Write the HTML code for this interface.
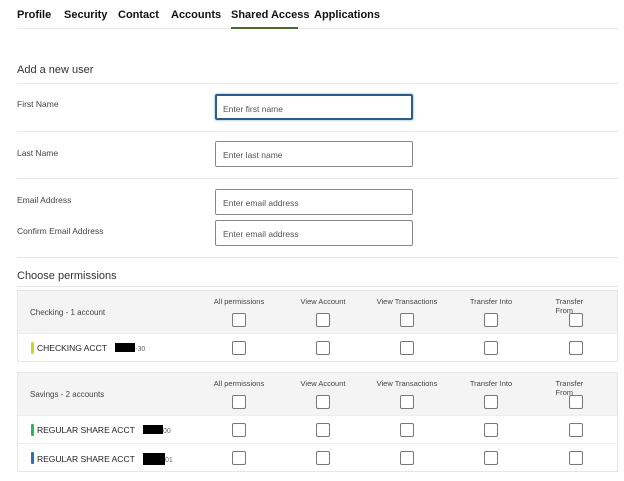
<!DOCTYPE html>
<html><head><style>
*{margin:0;padding:0;box-sizing:border-box}
body{width:624px;height:481px;background:#fff;font-family:"Liberation Sans",sans-serif;color:#333;position:relative;overflow:hidden}
.a{position:absolute;white-space:nowrap}
.tab{position:absolute;top:9px;font-size:11px;font-weight:bold;color:#111}
.hr{position:absolute;left:17px;width:601px;height:1px;background:#e6e6e6}
.lbl{position:absolute;left:17px;font-size:8.5px;color:#444}
.inp{position:absolute;left:215px;width:198px;height:26px;border:1px solid #888;border-radius:2px;font-size:8.5px;color:#555;padding:8px 0 0 7px}
.sec{position:absolute;left:17px;font-size:11px;color:#333}
.tbl{position:absolute;left:17px;width:601px;border:1px solid #e6e6e6}
.hd{background:#f4f4f4;position:relative}
.row{position:relative;height:28px;border-top:1px solid #eee}
.cb{position:absolute;width:14px;height:14px;border:1px solid #777;border-radius:2px;background:#fff}
.ch{position:absolute;font-size:7.5px;color:#444;transform:translateX(-50%);top:6px}
.acct{position:absolute;left:19px;top:9px;font-size:8.5px;color:#222}
.bar{position:absolute;left:13px;top:8px;width:3px;height:12px;border-radius:1px}
.blk{display:inline-block;background:#000;width:20px;height:9px;vertical-align:-1px;margin-left:6px}
.sfx{font-size:7px;color:#666}
</style></head><body>
<div class="tab" style="left:17px">Profile</div>
<div class="tab" style="left:64px">Security</div>
<div class="tab" style="left:118px">Contact</div>
<div class="tab" style="left:171px">Accounts</div>
<div class="tab" style="left:231px">Shared Access</div>
<div class="tab" style="left:314px">Applications</div>
<div class="hr" style="top:28px"></div>
<div class="a" style="left:231px;top:27px;width:67px;height:2px;background:#4a6b2a"></div>

<div class="sec" style="top:64px">Add a new user</div>
<div class="hr" style="top:83px"></div>
<div class="lbl" style="top:99px">First Name</div>
<div class="inp" style="top:94px;border:2px solid #2b5d8a;box-shadow:0 0 2px #6a9ac8;padding-left:6px">Enter first name</div>
<div class="hr" style="top:131px"></div>
<div class="lbl" style="top:148px">Last Name</div>
<div class="inp" style="top:141px">Enter last name</div>
<div class="hr" style="top:178px"></div>
<div class="lbl" style="top:195px">Email Address</div>
<div class="inp" style="top:189px">Enter email address</div>
<div class="lbl" style="top:226px">Confirm Email Address</div>
<div class="inp" style="top:220px">Enter email address</div>
<div class="hr" style="top:257px"></div>
<div class="sec" style="top:270px">Choose permissions</div>
<div class="hr" style="top:286px"></div>

<div class="tbl" style="top:290px">
 <div class="hd" style="height:42px">
  <div class="a" style="left:12px;top:17px;font-size:8px;color:#444">Checking - 1 account</div>
  <div class="ch" style="left:221px">All permissions</div><div class="ch" style="left:305px">View Account</div><div class="ch" style="left:389px">View Transactions</div><div class="ch" style="left:473px">Transfer Into</div><div class="ch" style="left:558px">Transfer From</div>
  <div class="cb" style="left:214px;top:22px"></div><div class="cb" style="left:298px;top:22px"></div><div class="cb" style="left:382px;top:22px"></div><div class="cb" style="left:466px;top:22px"></div><div class="cb" style="left:551px;top:22px"></div>
 </div>
 <div class="row"><div class="bar" style="background:#c8d62a"></div><div class="acct">CHECKING ACCT <span class="blk"></span><span class="sfx">-30</span></div>
  <div class="cb" style="left:214px;top:7px"></div><div class="cb" style="left:298px;top:7px"></div><div class="cb" style="left:382px;top:7px"></div><div class="cb" style="left:466px;top:7px"></div><div class="cb" style="left:551px;top:7px"></div></div>
</div>

<div class="tbl" style="top:372px">
 <div class="hd" style="height:42px">
  <div class="a" style="left:12px;top:17px;font-size:8px;color:#444">Savings - 2 accounts</div>
  <div class="ch" style="left:221px">All permissions</div><div class="ch" style="left:305px">View Account</div><div class="ch" style="left:389px">View Transactions</div><div class="ch" style="left:473px">Transfer Into</div><div class="ch" style="left:558px">Transfer From</div>
  <div class="cb" style="left:214px;top:22px"></div><div class="cb" style="left:298px;top:22px"></div><div class="cb" style="left:382px;top:22px"></div><div class="cb" style="left:466px;top:22px"></div><div class="cb" style="left:551px;top:22px"></div>
 </div>
 <div class="row"><div class="bar" style="background:#2bb95a"></div><div class="acct">REGULAR SHARE ACCT <span class="blk"></span><span class="sfx">00</span></div>
  <div class="cb" style="left:214px;top:7px"></div><div class="cb" style="left:298px;top:7px"></div><div class="cb" style="left:382px;top:7px"></div><div class="cb" style="left:466px;top:7px"></div><div class="cb" style="left:551px;top:7px"></div></div>
 <div class="row"><div class="bar" style="background:#2a6fb0"></div><div class="acct">REGULAR SHARE ACCT <span class="blk" style="width:22px;height:12px;vertical-align:-3px"></span><span class="sfx">01</span></div>
  <div class="cb" style="left:214px;top:7px"></div><div class="cb" style="left:298px;top:7px"></div><div class="cb" style="left:382px;top:7px"></div><div class="cb" style="left:466px;top:7px"></div><div class="cb" style="left:551px;top:7px"></div></div>
</div>
</body></html>
